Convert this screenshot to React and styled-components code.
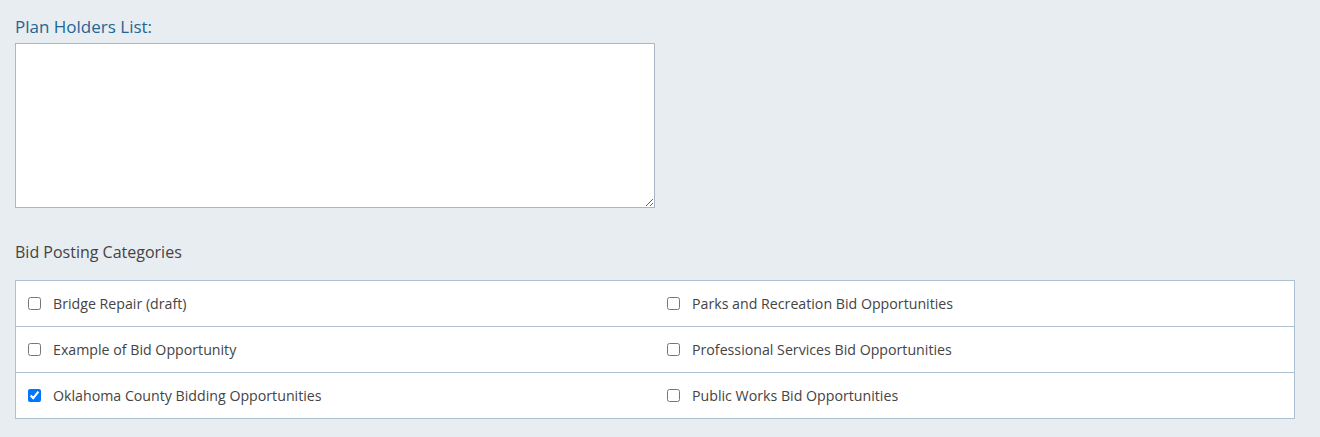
import styled, { createGlobalStyle } from "styled-components";

const GlobalStyle = createGlobalStyle`
  body {
    margin: 0;
    padding: 0;
    background-color: #e8edf1;
    font-family: "Open Sans", "Liberation Sans", sans-serif;
  }

  * {
    box-sizing: border-box;
  }
`;

const Page = styled.div`
  padding: 17px 15px 18px 15px;
  width: 1310px;
`;

const FieldLabel = styled.label`
  display: block;
  font-size: 17px;
  line-height: 20px;
  color: #1f6593;
  margin-bottom: 6px;
`;

const TextArea = styled.textarea`
  display: block;
  width: 640px;
  height: 165px;
  border: 1px solid #a9b7c6;
  background: #fff;
  resize: both;
  font: inherit;
  margin: 0 0 34px 0;
`;

const SectionTitle = styled.div`
  font-size: 16px;
  line-height: 20px;
  color: #444;
  margin-bottom: 18px;
`;

const Grid = styled.div`
  display: grid;
  grid-template-columns: 1fr 1fr;
  grid-auto-flow: column;
  grid-template-rows: 45px 46px 46px;
  width: 1280px;
  background: #fff;
  border: 1px solid #aebfd1;
`;

const Cell = styled.label`
  display: flex;
  align-items: center;
  gap: 12px;
  padding-left: 12px;
  font-size: 14.2px;
  color: #444;
  border-top: ${(p) => (p.$first ? "none" : "1px solid #aebfd1")};
`;

const Box = styled.input`
  width: 13px;
  height: 13px;
  margin: 0;
  accent-color: #0075ff;
`;

const categories = [
  { name: "Bridge Repair (draft)", checked: false },
  { name: "Example of Bid Opportunity", checked: false },
  { name: "Oklahoma County Bidding Opportunities", checked: true },
  { name: "Parks and Recreation Bid Opportunities", checked: false },
  { name: "Professional Services Bid Opportunities", checked: false },
  { name: "Public Works Bid Opportunities", checked: false },
];

const App = () => {
  return (
    <>
      <GlobalStyle />
      <Page>
        <FieldLabel htmlFor="planHolders">Plan Holders List:</FieldLabel>
        <TextArea id="planHolders" />
        <SectionTitle>Bid Posting Categories</SectionTitle>
        <Grid>
          {categories.map((c, i) => (
            <Cell key={c.name} $first={i % 3 === 0}>
              <Box type="checkbox" defaultChecked={c.checked} />
              {c.name}
            </Cell>
          ))}
        </Grid>
      </Page>
    </>
  );
};

export default App;
